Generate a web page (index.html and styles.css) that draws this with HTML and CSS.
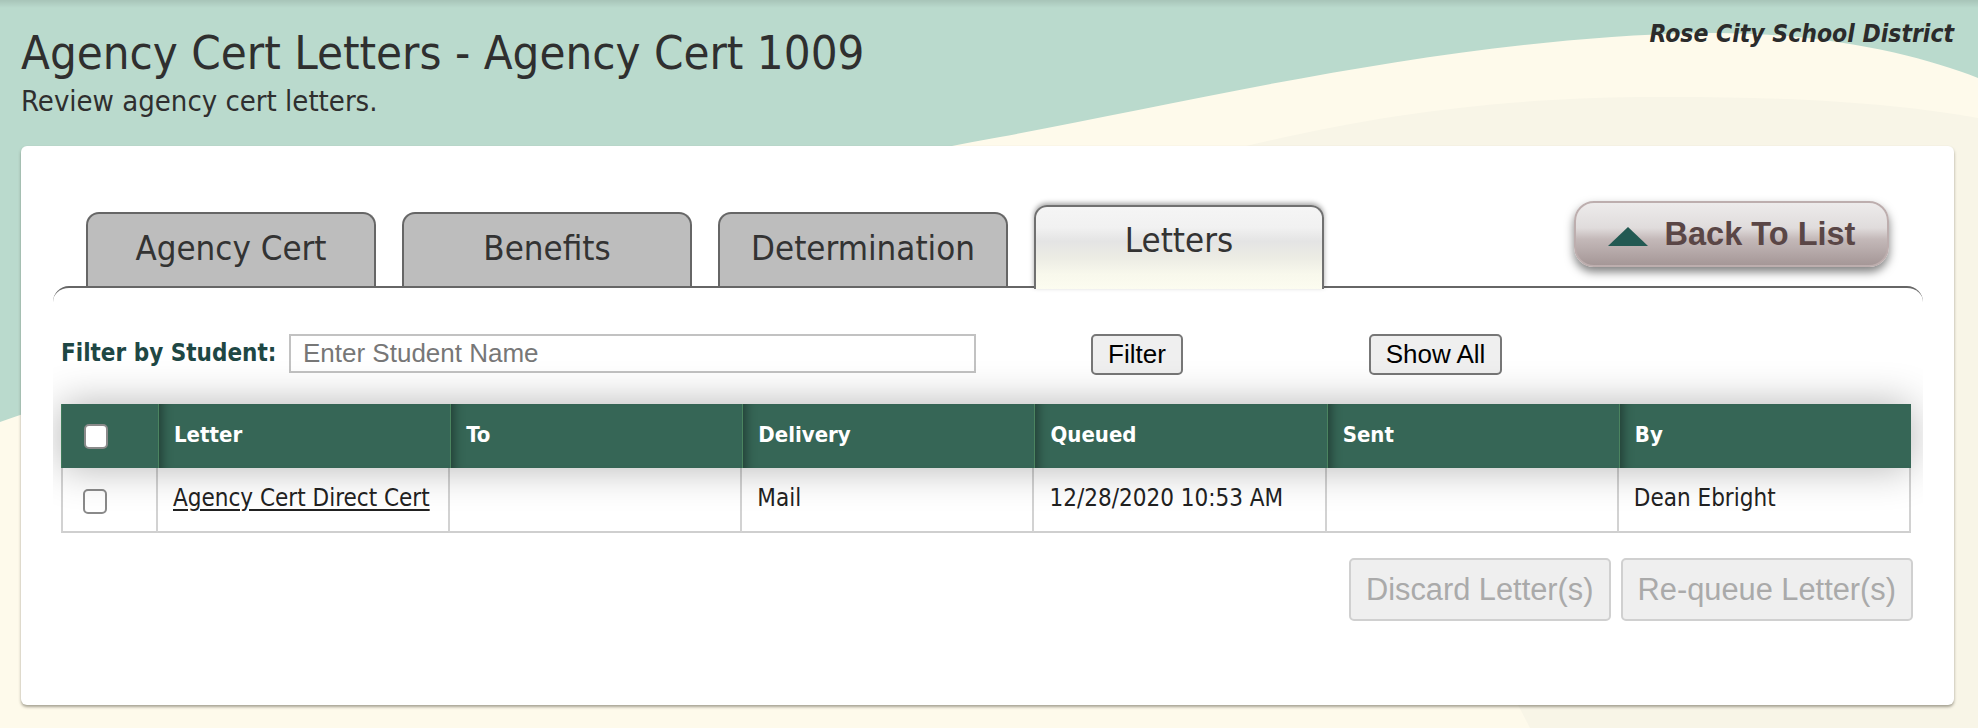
FILE: index.html
```html
<!DOCTYPE html>
<html lang="en">
<head>
<meta charset="utf-8">
<title>Agency Cert Letters - Agency Cert 1009</title>
<link rel="stylesheet" href="styles.css">
</head>
<body>
<div class="bg" aria-hidden="true">
  <svg width="1978" height="728" viewBox="0 0 1978 728" preserveAspectRatio="none">
    <defs>
      <linearGradient id="topshade" x1="0" y1="0" x2="0" y2="1">
        <stop offset="0" stop-color="#000" stop-opacity="0.10"/>
        <stop offset="1" stop-color="#000" stop-opacity="0"/>
      </linearGradient>
    </defs>
    <path d="M0,422 C250,335 700,190 1000,137 C1200,100 1450,38 1700,33 C1820,31 1920,55 1978,78 L1978,728 L0,728 Z" fill="#fefaeb"/>
    <path d="M1530,728 L1230,150 C1360,118 1480,99 1640,97 C1800,96 1900,104 1978,118 L1978,728 Z" fill="#f8f5e7"/>
    <rect x="0" y="0" width="1978" height="8" fill="url(#topshade)"/>
  </svg>
</div>
<div class="page">
  <header class="top">
    <div class="titles">
      <h1 class="title">Agency Cert Letters - Agency Cert 1009</h1>
      <p class="subtitle">Review agency cert letters.</p>
    </div>
    <div class="district">Rose City School District</div>
  </header>

  <main class="card">
    <nav class="tabbar">
      <div class="tab">Agency Cert</div>
      <div class="tab">Benefits</div>
      <div class="tab">Determination</div>
      <div class="tab active">Letters</div>
      <button class="back" type="button"><span class="tri"></span>Back To List</button>
    </nav>

    <section class="panel">
      <div class="filter">
        <label class="filter-label" for="student">Filter by Student:</label>
        <input class="filter-input" id="student" type="text" placeholder="Enter Student Name">
        <button class="btn btn-filter" type="button">Filter</button>
        <button class="btn btn-show" type="button">Show All</button>
      </div>

      <div class="grid">
        <div class="thead">
          <div class="th th-check"><input class="cb" type="checkbox"></div>
          <div class="th">Letter</div>
          <div class="th">To</div>
          <div class="th">Delivery</div>
          <div class="th">Queued</div>
          <div class="th">Sent</div>
          <div class="th">By</div>
        </div>
        <div class="trow">
          <div class="td td-check"><input class="cb" type="checkbox"></div>
          <div class="td"><a class="link" href="#">Agency Cert Direct Cert</a></div>
          <div class="td"></div>
          <div class="td">Mail</div>
          <div class="td">12/28/2020 10:53 AM</div>
          <div class="td"></div>
          <div class="td">Dean Ebright</div>
        </div>
      </div>

      <div class="actions">
        <button class="btn btn-dis" type="button" disabled>Discard Letter(s)</button>
        <button class="btn btn-dis" type="button" disabled>Re-queue Letter(s)</button>
      </div>
    </section>
  </main>
</div>
</body>
</html>
```

FILE: styles.css
```css
html, body {
  margin: 0;
  padding: 0;
}

body {
  width: 1978px;
  height: 728px;
  overflow: hidden;
  background: #badacd;
  position: relative;
  font-family: "DejaVu Sans Condensed", "DejaVu Sans", sans-serif;
  font-stretch: condensed;
  color: #333;
}

.bg {
  position: absolute;
  left: 0;
  top: 0;
  width: 1978px;
  height: 728px;
  z-index: 0;
}

.bg svg {
  display: block;
}

.page {
  position: relative;
  z-index: 1;
  padding: 0 24px 0 21px;
}

/* header */
.top {
  display: flex;
  justify-content: space-between;
  align-items: flex-start;
  padding-top: 22px;
}

.title {
  margin: 7px 0 0 0;
  font-size: 47px;
  line-height: 47px;
  font-weight: normal;
  color: #2f2f2f;
}

.subtitle {
  margin: 11px 0 0 0;
  font-size: 29px;
  line-height: 28px;
  color: #2f2f2f;
}

.district {
  font-size: 24.5px;
  line-height: 24.5px;
  font-weight: bold;
  font-style: italic;
  color: #2b2b2b;
}

/* card */
.card {
  margin-top: 31px;
  background: #fff;
  border-radius: 6px;
  box-shadow: 0 2px 3px rgba(60, 55, 40, 0.45);
  padding: 55px 31px 84px 32px;
}

.tabbar {
  display: flex;
  align-items: flex-end;
  gap: 26px;
  padding-left: 33px;
}

.tab {
  box-sizing: border-box;
  width: 290px;
  height: 74px;
  padding-bottom: 4px;
  border: 2px solid #666;
  border-bottom: none;
  border-radius: 13px 13px 0 0;
  background: #bdbdbd;
  font-size: 34.6px;
  color: #333;
  display: flex;
  align-items: center;
  justify-content: center;
}

.tab.active {
  position: relative;
  z-index: 2;
  height: 84px;
  margin-bottom: -3px;
  padding-bottom: 16px;
  border-color: #707070;
  background: linear-gradient(#f5f5f5 0%, #f1f1f1 25%, #e4e4e4 42%, #ececE4 62%, #f8f8ec 82%, #fcfcf0 100%);
  box-shadow: 0 -2px 5px rgba(0, 0, 0, 0.35);
}

.back {
  margin-left: auto;
  margin-right: 34px;
  margin-bottom: 19px;
  box-sizing: border-box;
  width: 315px;
  height: 66px;
  border: 2px solid #bdaeae;
  border-radius: 20px;
  background: linear-gradient(#edebeb 0%, #e0dcdc 40%, #c4b9b9 58%, #a59797 100%);
  box-shadow: 0 5px 10px rgba(0, 0, 0, 0.5);
  font-family: "Liberation Sans", Arial, sans-serif;
  font-weight: bold;
  font-size: 32.5px;
  color: #5a4646;
  display: flex;
  align-items: center;
  justify-content: center;
  gap: 17px;
  padding: 0;
  cursor: pointer;
}

.tri {
  width: 0;
  height: 0;
  border-left: 20px solid transparent;
  border-right: 20px solid transparent;
  border-bottom: 19px solid #225952;
  margin-top: 4px;
}

/* panel */
.panel {
  border-top: 2px solid #666;
  border-radius: 16px 16px 0 0;
  overflow: hidden;
  padding: 0 12px 0 8px;
}

.filter {
  margin-top: 46px;
  display: flex;
  align-items: flex-start;
  height: 41px;
}

.filter-label {
  width: 218px;
  font-size: 24px;
  font-weight: bold;
  color: #1e4744;
  line-height: 39px;
  margin-right: 10px;
  white-space: nowrap;
}

.filter-input {
  box-sizing: border-box;
  width: 687px;
  height: 39px;
  border: 2px solid #c2c2c2;
  padding: 0 12px;
  margin: 0;
  font-family: "Liberation Sans", Arial, sans-serif;
  font-size: 26px;
  color: #333;
  background: #fff;
  outline: none;
}

.filter-input::placeholder {
  color: #777;
}

.btn {
  box-sizing: border-box;
  margin: 0;
  font-family: "Liberation Sans", Arial, sans-serif;
  background: #efefef;
  border-radius: 5px;
  padding: 0;
}

.btn-filter,
.btn-show {
  height: 41px;
  border: 2px solid #777;
  font-size: 26px;
  color: #000;
}

.btn-filter {
  width: 92px;
  margin-left: 115px;
}

.btn-show {
  width: 133px;
  margin-left: 186px;
}

/* table */
.grid {
  margin-top: 29px;
}

.thead,
.trow {
  display: grid;
  grid-template-columns: 97px repeat(6, 1fr);
}

.thead {
  position: relative;
  z-index: 1;
  height: 64px;
  background: #366656;
  box-shadow: 0 0 40px rgba(0, 0, 0, 0.3);
}

.th {
  display: flex;
  align-items: center;
  padding-left: 15px;
  padding-bottom: 4px;
  border-left: 1px solid #4b8460;
  box-shadow: inset 12px 0 12px -10px rgba(0, 0, 0, 0.45);
  font-size: 22px;
  font-weight: bold;
  color: #fff;
}

.th-check {
  box-shadow: none;
  border-left-color: #3f7a5a;
  padding-left: 22px;
  padding-bottom: 0;
}

.trow {
  height: 65px;
}

.td {
  display: flex;
  align-items: center;
  padding-left: 15px;
  padding-bottom: 3px;
  background: #fff;
  border-right: 2px solid #d2d2d2;
  border-bottom: 2px solid #cfcfcf;
  font-size: 24px;
  color: #222;
}

.td:first-child {
  border-left: 2px solid #d2d2d2;
}

.td.td-check {
  padding-left: 20px;
  padding-bottom: 0;
}

.link {
  color: #222;
  text-decoration: underline;
  text-underline-offset: 3px;
}

.cb {
  appearance: none;
  -webkit-appearance: none;
  box-sizing: border-box;
  width: 24px;
  height: 25px;
  margin: 0;
  border: 2px solid #8a8a8a;
  border-radius: 5px;
  background: #fff;
}

.td .cb {
  margin-top: 4px;
}

/* actions */
.actions {
  margin-top: 25px;
  margin-right: -2px;
  display: flex;
  justify-content: flex-end;
  gap: 10px;
}

.btn-dis {
  height: 63px;
  padding: 0 15px;
  border: 2px solid #d0d0d0;
  font-size: 30.8px;
  color: #aaa;
}
```
